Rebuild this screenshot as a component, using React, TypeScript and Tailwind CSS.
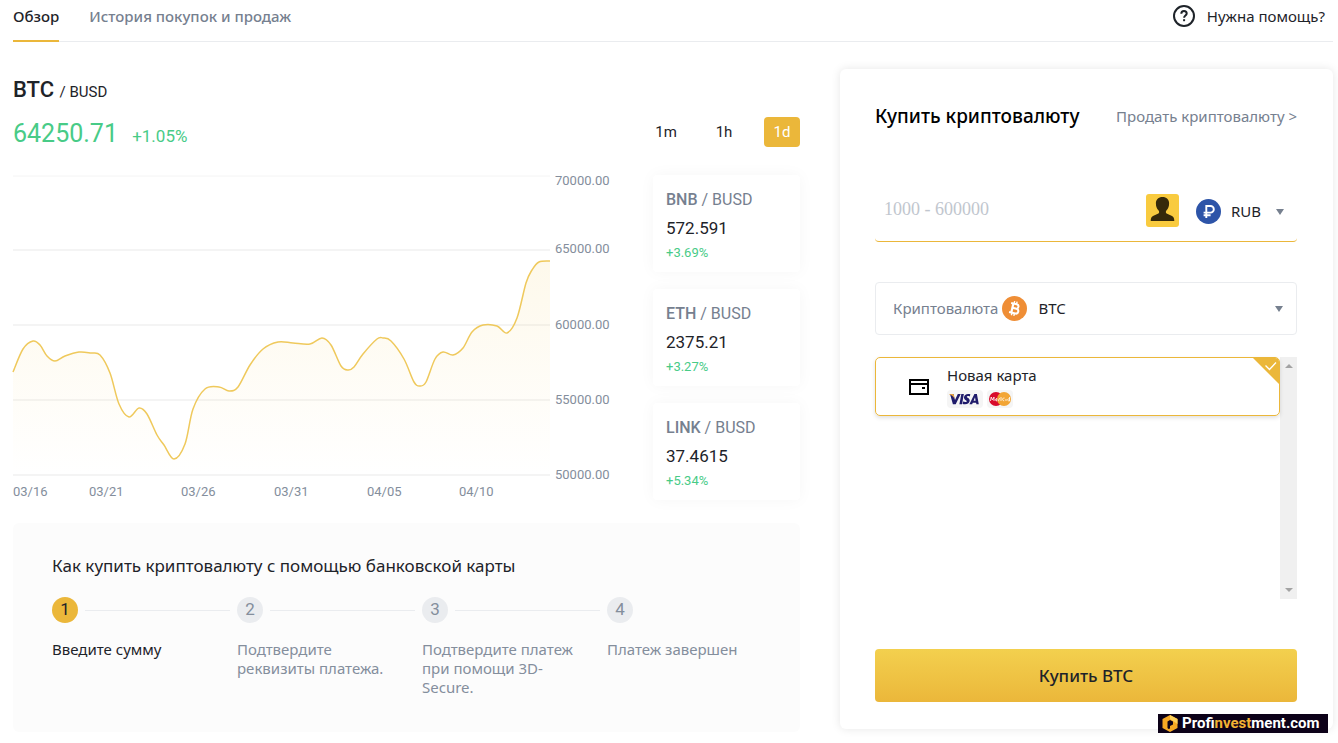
import { useState } from "react";

const pairs = [
  { base: "BNB", price: "572.591", change: "+3.69%" },
  { base: "ETH", price: "2375.21", change: "+3.27%" },
  { base: "LINK", price: "37.4615", change: "+5.34%" },
];

const steps = [
  "Введите сумму",
  "Подтвердите реквизиты платежа.",
  "Подтвердите платеж при помощи 3D-Secure.",
  "Платеж завершен",
];

const gridLines = [
  { y: 1, labelY: 10, label: "70000.00" },
  { y: 75, labelY: 78, label: "65000.00" },
  { y: 150, labelY: 154, label: "60000.00" },
  { y: 225, labelY: 229, label: "55000.00" },
  { y: 300, labelY: 304, label: "50000.00" },
];

const dates = [
  { x: 0, label: "03/16" },
  { x: 76, label: "03/21" },
  { x: 168, label: "03/26" },
  { x: 261, label: "03/31" },
  { x: 354, label: "04/05" },
  { x: 446, label: "04/10" },
];

const points = [
  [0, 197], [10, 174], [20, 166], [27, 170], [34, 181], [42, 186], [52, 181], [66, 177], [78, 178],
  [87, 180], [97, 198], [106, 229], [116, 242], [126, 233], [134, 239], [144, 260], [151, 270],
  [161, 284], [172, 269], [180, 234], [192, 214], [206, 212], [216, 216], [225, 212], [237, 190],
  [250, 174], [265, 167], [280, 168], [297, 169], [309, 163], [318, 170], [328, 191], [335, 195],
  [341, 192], [350, 179], [364, 164], [370, 163], [378, 166], [391, 184], [401, 207], [407, 211],
  [413, 207], [422, 184], [430, 177], [440, 180], [450, 173], [459, 157], [470, 150], [484, 151],
  [494, 158], [504, 143], [513, 108], [519, 95], [526, 87], [537, 86],
];

// Catmull-Rom spline turned into bezier segments
function linePath(pts: number[][]) {
  let d = `M${pts[0][0]} ${pts[0][1]}`;
  for (let i = 0; i < pts.length - 1; i++) {
    const p0 = pts[i - 1] || pts[i];
    const p1 = pts[i];
    const p2 = pts[i + 1];
    const p3 = pts[i + 2] || p2;
    d += ` C${p1[0] + (p2[0] - p0[0]) / 6} ${p1[1] + (p2[1] - p0[1]) / 6} ${
      p2[0] - (p3[0] - p1[0]) / 6
    } ${p2[1] - (p3[1] - p1[1]) / 6} ${p2[0]} ${p2[1]}`;
  }
  return d;
}

function Chart() {
  const line = linePath(points);
  return (
    <svg viewBox="0 0 597 326" className="block w-full overflow-visible" role="img" aria-label="BTC / BUSD">
      <defs>
        <linearGradient id="area" x1="0" y1="0" x2="0" y2="1">
          <stop offset="0" stopColor="#f3c23a" stopOpacity="0.1" />
          <stop offset="1" stopColor="#f3c23a" stopOpacity="0" />
        </linearGradient>
      </defs>
      {gridLines.map((g) => (
        <g key={g.label}>
          <line x1="0" x2="537" y1={g.y} y2={g.y} stroke="#f4f4f4" strokeWidth={g.y === 1 ? 1 : 2} />
          <text x="542" y={g.labelY} className="fill-[#848e9c] font-['Roboto',sans-serif] text-[13px]">
            {g.label}
          </text>
        </g>
      ))}
      <path d={`${line} V300 H0 Z`} fill="url(#area)" />
      <path d={line} fill="none" stroke="#efc95c" strokeWidth="1.5" />
      {dates.map((d) => (
        <text key={d.label} x={d.x} y="321" className="fill-[#848e9c] font-['Roboto',sans-serif] text-[13px]">
          {d.label}
        </text>
      ))}
    </svg>
  );
}

function Caret() {
  return (
    <svg viewBox="0 0 8 6" className="pointer-events-none w-2 h-[6px] shrink-0" aria-hidden="true">
      <path d="M0 0h8L4 6z" fill="#76808f" />
    </svg>
  );
}

function HelpIcon() {
  return (
    <svg viewBox="0 0 22 22" className="w-[22px] h-[22px]" fill="none" stroke="#1e2329" strokeWidth="2" aria-hidden="true">
      <circle cx="11" cy="11" r="10" />
      <path d="M8.3 8.8c0-1.7 1.1-2.8 2.7-2.8s2.7 1 2.7 2.5c0 2-2.6 2-2.6 4.2" />
      <path d="M11.1 14.2v2" />
    </svg>
  );
}

function UserBadge() {
  return (
    <svg viewBox="0 0 33 33" className="w-[33px] h-[33px]" aria-hidden="true">
      <rect width="33" height="33" rx="3" fill="#f9cb3f" />
      <path
        d="M16.5 3c-4 0-6.6 2.7-6.6 6.3 0 3 .8 5.4 2.7 7.3.8 1 .7 2.4-.2 3l-4.900 2.200C5.600 22.600 4.700 24 4.700 27h23.600c0-3-.9-4.400-2.800-5.200l-4.900-2.200c-.9-.6-1-2-.2-3 1.900-1.900 2.700-4.300 2.700-7.300C23.100 5.700 20.500 3 16.500 3z"
        fill="#35290a"
      />
    </svg>
  );
}

function RubIcon() {
  return (
    <svg viewBox="0 0 25 25" className="w-[25px] h-[25px]" fill="none" aria-hidden="true">
      <circle cx="12.5" cy="12.5" r="12.5" fill="#2d54a8" />
      <path d="M10.3 19V7h4.2a3.3 3.3 0 010 6.6H7.6M7.6 16.2h7" stroke="#fff" strokeWidth="1.9" />
    </svg>
  );
}

function BtcIcon() {
  return (
    <svg viewBox="0 0 25 25" className="w-[25px] h-[25px]" fill="none" aria-hidden="true">
      <circle cx="12.5" cy="12.5" r="12.5" fill="#ef8e36" />
      <g transform="rotate(13 12.5 12.5)" stroke="#fff">
        <path d="M8 7.8h5.7a2.2 2.2 0 010 4.5h-3.500M10.200 12.300h4.200a2.400 2.400 0 010 4.900H8" strokeWidth="2" />
        <path d="M10.3 7.8v9.4" strokeWidth="2.2" />
        <path d="M11 5.2v2.600M13.500 5.200v2.600M11 17.200v2.600M13.500 17.200v2.600" strokeWidth="1.4" />
      </g>
    </svg>
  );
}

function WalletIcon() {
  return (
    <svg viewBox="0 0 20 16" className="w-5 h-4" fill="none" stroke="#000" strokeWidth="2" aria-hidden="true">
      <path d="M1 1h18v14H1zM1 5h18" />
      <path d="M13 9h3" />
    </svg>
  );
}

function Visa() {
  return (
    <span className="flex items-center justify-center w-9 h-[18px] rounded-sm bg-[#f5f5f5]">
      <svg viewBox="2 0 36 18" className="w-9 h-[18px]" role="img" aria-label="Visa">
        <g fill="#1f1b6b">
          <path d="M5 4h3.5l1.5 6 2.8-6h2.9l-5 10.3H7.9z" />
          <path d="M16.3 4h2.600l-1.900 10.300h-2.600z" />
          <path d="M25.3 4.300l-.5 2.200c-1.600-.7-3-.5-3 .2 0 1 2.900 1.200 2.900 3.800 0 3-3.200 4.500-7.100 3.400l.5-2.300c1.800.8 3.500.6 3.600-.4 0-1.100-2.700-1.100-2.700-3.700 0-2.900 3-4.200 6.300-3.200z" />
          <path d="M29.4 4h2.500l1.900 10.300h-2.400l-.3-1.500h-3.300l-.7 1.500h-2.700zm.6 3.200l-1.400 3.600h2z" />
        </g>
        <path d="M4 4h3.5c.9 0 1.300.5 1.500 1.300L9.500 9C8.500 6.600 7 5 4 4.300z" fill="#e8a33d" />
      </svg>
    </span>
  );
}

function Mastercard() {
  return (
    <span className="flex items-center justify-center w-[26px] h-[18px] rounded-sm bg-[#f5f5f5]">
      <svg viewBox="0 0 22 14" className="w-[22px] h-[14px]" role="img" aria-label="MasterCard">
        <circle cx="7" cy="7" r="7" fill="#d80b2c" />
        <circle cx="15" cy="7" r="7" fill="#f2a535" />
        <path
          d="M1.5 9l.7-4L3.500 8 5 5v4M8 6.500c-2 0-2 2.500-.3 2.500V6.500M11 6.500c-2 0-.5 2.500-2 2.500M12 5v4M15.500 6c-2.500-.5-2.500 3-.3 2.800M17 9V7M20.500 5v4c-2.500 0-2.500-2.300 0-2.300"
          fill="none"
          stroke="#fff"
          strokeWidth="0.8"
        />
      </svg>
    </span>
  );
}

export default function App() {
  const [range, setRange] = useState("1d");
  const [amount, setAmount] = useState("");

  return (
    <div className="relative pl-[13px] pr-[5px] pb-[11px] bg-white text-[#1e2329] font-['Noto_Sans',sans-serif] text-[15px]">
      <nav className="flex h-[42px] border-b border-[#eaecef]">
        <a href="#overview" className="h-[42px] pt-[5px] leading-[22px] font-medium border-b-2 border-[#ebb73a]">
          Обзор
        </a>
        <a href="#history" className="ml-[30px] pt-[5px] leading-[22px] font-medium text-[#76808f]">
          История покупок и продаж
        </a>
        <a href="#help" className="flex items-center h-8 gap-3 ml-auto mr-2">
          <HelpIcon />
          Нужна помощь?
        </a>
      </nav>

      <main className="flex items-start gap-10 pt-[27px]">
        <div className="flex-1 min-w-0">
          <div className="flex items-end justify-between">
            <div className="pt-[7px]">
              <h1 className="font-['Roboto',sans-serif] text-[22px] leading-7 font-medium">
                BTC <span className="text-[15px] font-normal">/ BUSD</span>
              </h1>
              <p className="mt-[14px] leading-7 font-['Roboto',sans-serif] text-[25px] text-[#48cb87]">
                64250.71 <span className="ml-2 text-[17px]">+1.05%</span>
              </p>
            </div>
            <div className="flex gap-[14px] mb-[3px] font-['Roboto',sans-serif]">
              {["1m", "1h", "1d"].map((r) => (
                <button
                  key={r}
                  type="button"
                  onClick={() => setRange(r)}
                  className={`w-9 h-[30px] rounded ml-2 ${
                    range === r ? "bg-[#ebb73a] text-white" : ""
                  }`}>
                  {r}
                </button>
              ))}
            </div>
          </div>

          <div className="flex gap-[43px] mt-[25px]">
            <div className="flex-1 min-w-0">
              <Chart />
            </div>
            <ul className="w-[147px] space-y-[17px] font-['Roboto',sans-serif]">
              {pairs.map((p) => (
                <li key={p.base} className="h-[97px] px-[13px] pt-[14px] rounded bg-white shadow-[0_0_16px_rgba(0,0,0,0.04)]">
                  <p className="leading-[22px] text-[16px] text-[#76808f]">
                    <span className="font-medium">{p.base}</span> / BUSD
                  </p>
                  <p className="mt-[6px] leading-[22px] text-[17px]">{p.price}</p>
                  <p className="mt-[6px] leading-4 text-[13px] text-[#48cb87]">{p.change}</p>
                </li>
              ))}
            </ul>
          </div>

          <section className="mt-[22px] pt-[31px] pb-[35px] pl-[39px] pr-2 rounded-md bg-[#fcfcfc]">
            <h2 className="text-[17px] leading-6">Как купить криптовалюту с помощью банковской карты</h2>
            <ol className="grid grid-cols-4 mt-[19px]">
              {steps.map((s, i) => (
                <li key={s}>
                  <div className="flex items-center">
                    <span
                      className={`flex items-center justify-center w-[26px] h-[26px] rounded-full font-['Roboto',sans-serif] text-[17px] ${
                        i === 0 ? "bg-[#ebb73a]" : "bg-[#eaecef] text-[#848e9c]"
                      }`}>
                      {i + 1}
                    </span>
                    {i < steps.length - 1 && <span className="flex-1 h-px mx-[7px] bg-[#eaecef]" />}
                  </div>
                  <p className={`mt-[17px] pr-6 leading-[19px] ${i === 0 ? "" : "text-[#848e9c]"}`}>{s}</p>
                </li>
              ))}
            </ol>
          </section>
        </div>

        <form className="w-[493px] pl-[35px] pr-9 pt-[33px] pb-[27px] rounded-md bg-white shadow-[0_0_10px_rgba(0,0,0,0.1)]">
          <div className="flex items-center justify-between">
            <h2 className="text-[19px] leading-7 font-medium text-black">Купить криптовалюту</h2>
            <a href="#sell" className="text-[#76808f]">
              Продать криптовалюту &gt;
            </a>
          </div>

          <div className="flex items-center h-[60px] mt-[52px] pr-[13px] border-b border-[#ebb73a] rounded-[4px]">
            <input
              type="text"
              aria-label="Сумма"
              value={amount}
              onChange={(e) => setAmount(e.target.value)}
              placeholder="1000 - 600000"
              className="flex-1 min-w-0 pl-[9px] pb-1 outline-none font-['Liberation_Serif',serif] text-[18px] placeholder:text-[#c1c6ce]"
            />
            <button type="button" aria-label="Профиль" className="mr-[17px] mb-[2px]">
              <UserBadge />
            </button>
            <RubIcon />
            <select aria-label="Валюта" className="w-[45px] ml-[10px] appearance-none outline-none">
              <option>RUB</option>
            </select>
            <Caret />
          </div>

          <div className="flex items-center h-[53px] mt-10 pl-[17px] pr-[13px] border border-[#eaecef] rounded-[4px]">
            <label htmlFor="crypto" className="mr-1 text-[#76808f]">
              Криптовалюта
            </label>
            <BtcIcon />
            <select id="crypto" className="flex-1 ml-[11px] appearance-none outline-none">
              <option>BTC</option>
            </select>
            <Caret />
          </div>

          <div className="flex h-[242px] mt-[22px]">
            <div className="flex-1">
              <label className="relative flex h-[59px] pl-[33px] overflow-hidden border border-[#ebb73a] rounded-[5px] shadow-[0_2px_4px_rgba(0,0,0,0.12)]">
                <input type="radio" name="card" defaultChecked className="sr-only" />
                <span className="flex items-center mr-[18px]">
                  <WalletIcon />
                </span>
                <span className="pt-[6px]">
                  <span className="block leading-[22px]">Новая карта</span>
                  <span className="flex gap-1 mt-1">
                    <Visa />
                    <Mastercard />
                  </span>
                </span>
                <svg viewBox="0 0 26 26" className="absolute top-0 right-0 w-[26px] h-[26px]" aria-hidden="true">
                  <path d="M0 0h26v26z" fill="#ebb73a" />
                  <path d="M12.5 7.5l4 4 6.500-7" fill="none" stroke="#fff" strokeWidth="1.3" />
                </svg>
              </label>
            </div>
            <div className="flex flex-col items-center justify-between w-[17px] py-[7px] bg-[#f0f0f0]" aria-hidden="true">
              <svg viewBox="0 0 8 4" className="w-2 h-1">
                <path d="M0 4h8L4 0z" fill="#a3a3a3" />
              </svg>
              <svg viewBox="0 0 8 4" className="w-2 h-1">
                <path d="M0 0h8L4 4z" fill="#a3a3a3" />
              </svg>
            </div>
          </div>

          <button
            type="submit"
            className="w-full h-[53px] mt-[50px] rounded bg-gradient-to-b from-[#f3d04e] to-[#ebb73a] text-[17px] font-medium">
            Купить BTC
          </button>
        </form>
      </main>

      <div className="absolute bottom-[10px] right-[10px] flex items-center gap-1 w-[170px] h-[19px] pl-1 bg-[#0c0118] font-['Roboto',sans-serif] text-[15px] leading-[19px] font-bold text-white">
        <svg viewBox="0 0 16 17" className="w-4 h-[17px]" aria-hidden="true">
          <path d="M8 0l7.5 4v9L8 17 .5 13V4z" fill="#f6a823" />
          <path d="M8 0l7.5 4v5L8 4z" fill="#fdd05a" />
          <path d="M5.5 13V6.500L8 5l3 1.500v3L8 11v2.500L6.500 14z" fill="#0c0118" />
        </svg>
        <span>
          Prof<span className="text-[#f2b233]">invest</span>ment.com
        </span>
      </div>
    </div>
  );
}
